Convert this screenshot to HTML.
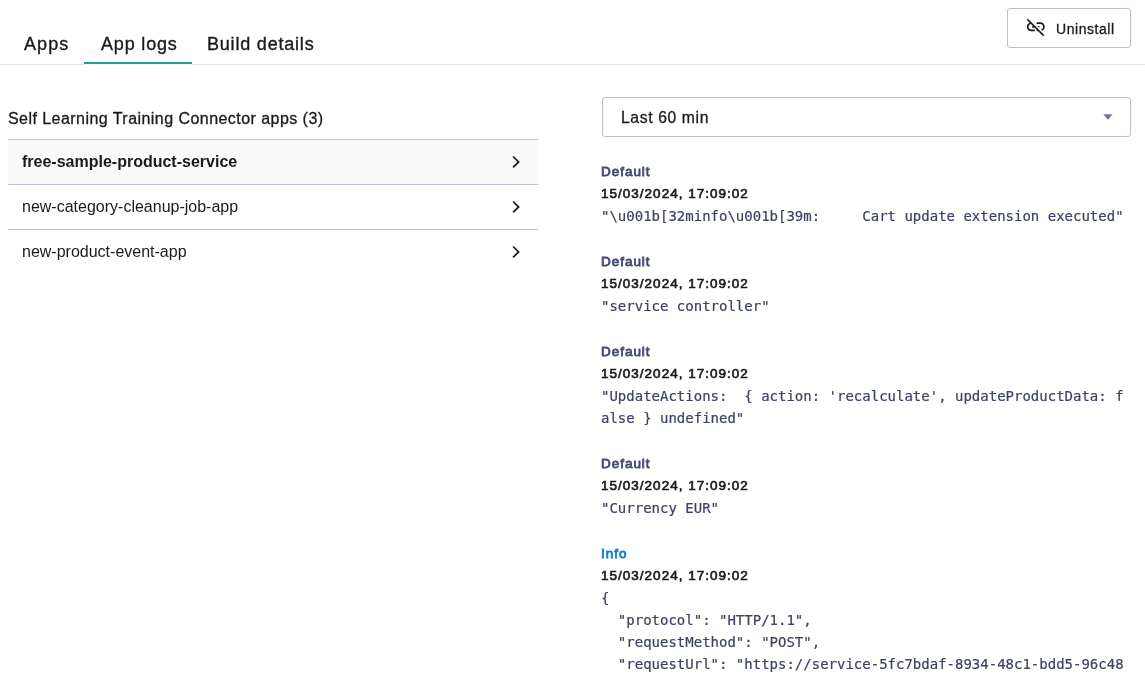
<!DOCTYPE html>
<html lang="en">
<head>
<meta charset="utf-8">
<title>App logs</title>
<style>
*{box-sizing:border-box;margin:0;padding:0}
html,body{width:1145px;height:677px;overflow:hidden;background:#fff}
body{position:relative;will-change:transform;font-family:"Liberation Sans",sans-serif;color:#1a1a1a}
.abs{position:absolute;white-space:nowrap}
.tab{-webkit-text-stroke:.35px #1a1a1a;position:absolute;top:31px;height:26px;line-height:26px;font-size:18px;color:#1a1a1a;white-space:nowrap}
.divider{position:absolute;left:0;top:64px;width:1145px;height:1px;background:#e0e1ec}
.underline{position:absolute;left:84px;top:62px;width:108px;height:2px;background:#1da394}
.undermask{position:absolute;left:84px;top:64px;width:108px;height:1px;background:#f6f0f5}
.btn{position:absolute;left:1007px;top:8px;width:124px;height:40px;border:1px solid #b9bcd2;border-radius:3px;background:#fff}
.btn span{-webkit-text-stroke:.3px #1a1a1a;position:absolute;left:48px;top:0;line-height:40px;font-size:14px;letter-spacing:.55px;color:#1a1a1a}
.btn svg{position:absolute;left:17.2px;top:7.35px}
.heading{-webkit-text-stroke:.3px #1a1a1a;position:absolute;left:8px;top:109px;letter-spacing:.45px;font-size:16px;line-height:20px;color:#1a1a1a;white-space:nowrap}
.list{position:absolute;left:8px;top:139px;width:530px}
.row{position:relative;height:45px;border-top:1px solid #bdc0d7;font-size:16px;line-height:44px;padding-left:14px;color:#1a1a1a}
.row.sel{background:#f9f9f9;font-weight:bold}
.row svg{position:absolute;right:18px;top:16px;overflow:visible}
.select{position:absolute;left:602px;top:97px;width:529px;height:40px;border:1px solid #b9bcd2;border-radius:3px;background:#fff}
.select span{-webkit-text-stroke:.3px #1a1a1a;position:absolute;left:18px;top:0;line-height:40px;font-size:15.7px;letter-spacing:.63px;color:#1a1a1a}
.select svg{position:absolute;left:500.3px;top:16.3px}
.logs{position:absolute;left:601px;top:161px;width:529px}
.entry{margin-bottom:24px}
.lvl{font-size:13.5px;letter-spacing:.97px;line-height:22px;font-weight:normal;-webkit-text-stroke:.8px;color:#454a72}
.lvl.info{color:#0b7dd4}
.date{font-size:13.5px;letter-spacing:1.01px;line-height:22px;font-weight:normal;-webkit-text-stroke:.65px #1a1a1a;color:#1a1a1a}
.msg{font-family:"DejaVu Sans Mono","Liberation Mono",monospace;font-size:14px;line-height:22px;color:#3d4263;-webkit-text-stroke:.2px;white-space:pre-wrap;word-break:break-all}
</style>
</head>
<body>
<div class="tab" style="left:24px;letter-spacing:1.1px">Apps</div>
<div class="tab" style="left:101px;letter-spacing:.83px">App logs</div>
<div class="tab" style="left:207px;letter-spacing:.8px">Build details</div>
<div class="divider"></div>
<div class="underline"></div><div class="undermask"></div>

<div class="btn">
<svg width="21.6" height="21.6" viewBox="0 0 24 24" fill="#1a1a1a"><path d="M17 7h-4v1.9h4c1.71 0 3.1 1.39 3.1 3.1 0 1.43-.98 2.63-2.31 2.98l1.46 1.46C20.88 15.61 22 13.95 22 12c0-2.76-2.24-5-5-5zm-1 4h-2.19l2 2H16v-2zM2 4.27l3.11 3.11C3.29 8.12 2 9.91 2 12c0 2.76 2.24 5 5 5h4v-1.9H7c-1.71 0-3.1-1.39-3.1-3.1 0-1.59 1.21-2.9 2.76-3.07L8.73 11H8v2h2.73L13 15.27V17h1.73l4.01 4L20 19.74 3.27 3 2 4.27z"/><path d="M19 20l1.8 1.8" stroke="#1a1a1a" stroke-width="1.79" fill="none"/></svg>
<span>Uninstall</span>
</div>

<div class="heading">Self Learning Training Connector apps (3)</div>
<div class="list">
<div class="row sel">free-sample-product-service<svg width="8" height="13" viewBox="0 0 8 13" fill="none" stroke="#1a1a1a" stroke-width="1.75"><path d="M1.1 .5 L6.6 5.95 L1.1 11.4"/></svg></div>
<div class="row">new-category-cleanup-job-app<svg width="8" height="13" viewBox="0 0 8 13" fill="none" stroke="#1a1a1a" stroke-width="1.75"><path d="M1.1 .5 L6.6 5.95 L1.1 11.4"/></svg></div>
<div class="row">new-product-event-app<svg width="8" height="13" viewBox="0 0 8 13" fill="none" stroke="#1a1a1a" stroke-width="1.75"><path d="M1.1 .5 L6.6 5.95 L1.1 11.4"/></svg></div>
</div>

<div class="select"><span>Last 60 min</span><svg width="10" height="6" viewBox="0 0 10 6"><path d="M.3 .2h9.3L4.95 5.8z" fill="#6f75a0"/></svg></div>

<div class="logs">
<div class="entry"><div class="lvl">Default</div><div class="date">15/03/2024, 17:09:02</div><div class="msg">"\u001b[32minfo\u001b[39m:     Cart update extension executed"</div></div>
<div class="entry"><div class="lvl">Default</div><div class="date">15/03/2024, 17:09:02</div><div class="msg">"service controller"</div></div>
<div class="entry"><div class="lvl">Default</div><div class="date">15/03/2024, 17:09:02</div><div class="msg">"UpdateActions:  { action: 'recalculate', updateProductData: false } undefined"</div></div>
<div class="entry"><div class="lvl">Default</div><div class="date">15/03/2024, 17:09:02</div><div class="msg">"Currency EUR"</div></div>
<div class="entry"><div class="lvl info">Info</div><div class="date">15/03/2024, 17:09:02</div><div class="msg">{
  "protocol": "HTTP/1.1",
  "requestMethod": "POST",
  "requestUrl": "https://service-5fc7bdaf-8934-48c1-bdd5-96c48</div></div>
</div>
</body>
</html>
